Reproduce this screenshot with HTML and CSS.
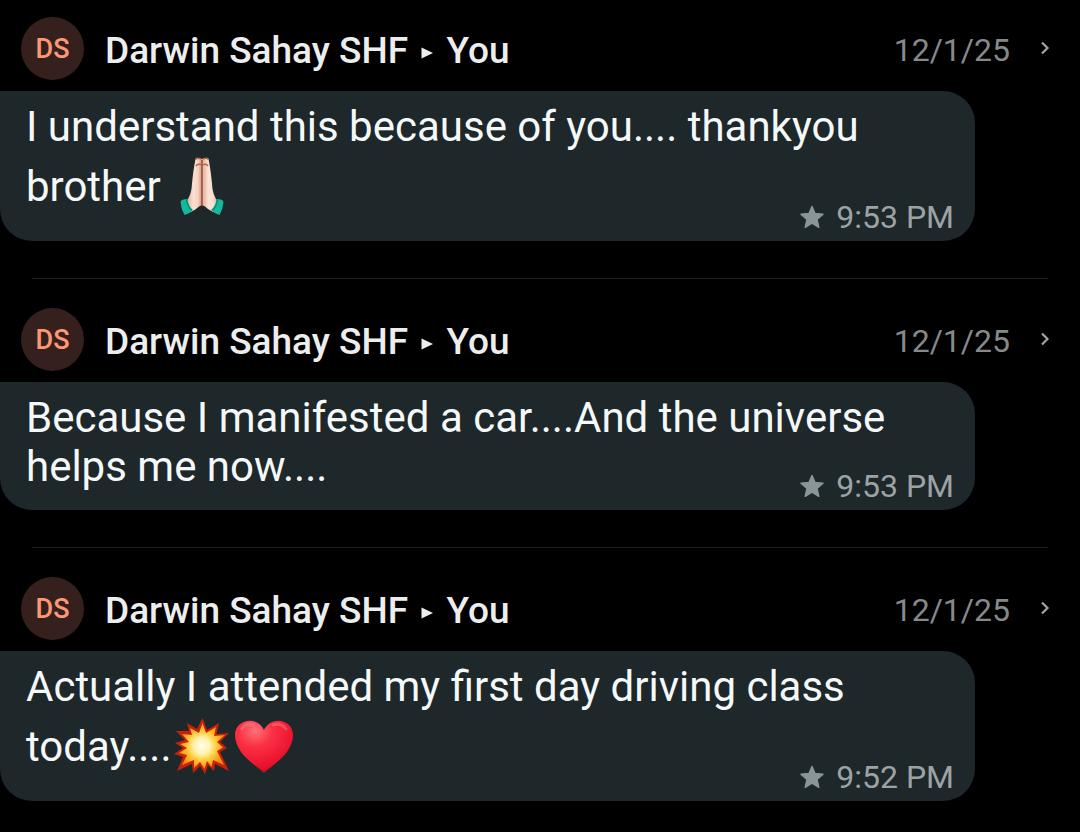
FILE: index.html
```html
<!DOCTYPE html>
<html lang="en">
<head>
  <meta charset="UTF-8">
  <title>Starred messages</title>
  <meta name="viewport" content="width=device-width, initial-scale=1.0">
  <link rel="stylesheet" href="styles.css">
</head>
<body>

  <!-- shared icons -->
  <svg class="defs" width="0" height="0" aria-hidden="true">
    <symbol id="triangle" viewBox="0 0 12 12">
      <path d="M0.5 0.5L12 6L0.5 11.5Z" fill="currentColor"/>
    </symbol>
    <symbol id="chevron" viewBox="0 0 10 16">
      <path d="M2 1.5L7.5 7L2 12.5" fill="none" stroke="currentColor" stroke-width="2.200"/>
    </symbol>
    <symbol id="star" viewBox="0 0 24 24">
      <path d="M12 1.5L15 8.6L23 9.2L17 14.4L18.8 22.3L12 18.2L5.2 22.3L7 14.4L1 9.2L9 8.6Z" fill="currentColor" stroke="currentColor" stroke-width="1.500" stroke-linejoin="round"/>
    </symbol>
  </svg>

  <main class="messages">
    <article class="message">
      <header class="header">
        <span class="avatar">DS</span>
        <h2 class="name">Darwin Sahay SHF <svg class="triangle"><use href="#triangle"/></svg> You</h2>
        <time class="date">12/1/25</time>
        <svg class="chevron"><use href="#chevron"/></svg>
      </header>
      <div class="bubble">
        <p class="text">I understand this because of you.... thankyou<br>brother <svg class="emoji" viewBox="0 0 60 71" role="img" aria-label="folded hands">
          <defs>
            <linearGradient id="skinLeft" x1="0" y1="0" x2="1" y2="0">
              <stop offset="0" stop-color="#dfa78d"/>
              <stop offset="0.45" stop-color="#fbe0d2"/>
              <stop offset="0.75" stop-color="#f6d3c2"/>
              <stop offset="1" stop-color="#cf8f78"/>
            </linearGradient>
            <linearGradient id="skinRight" x1="0" y1="0" x2="1" y2="0">
              <stop offset="0" stop-color="#e0ab95"/>
              <stop offset="0.4" stop-color="#fbe3d6"/>
              <stop offset="0.7" stop-color="#f8dccd"/>
              <stop offset="1" stop-color="#dfa78d"/>
            </linearGradient>
          </defs>
          <path d="M23.5 8Q24 6.500 27 7L30 8V54Q27 55 24 58L19 61L14 51Q18 46 19.500 38Q21 20 23.500 8Z" fill="url(#skinLeft)"/>
          <path d="M36.500 8Q36 6.500 33 7L30 8V54Q33 55 36 58L41 61L46 51Q42 46 40.500 38Q39 20 36.500 8Z" fill="url(#skinRight)"/>
          <path d="M30 9V55" stroke="#96503c" stroke-width="1.500" fill="none"/>
          <path d="M24 15Q26 12 29 14M36 15Q34 12 31 14M23.500 8.500Q25 6.500 29 8M31 8Q35 6.500 36.500 8.500" stroke="#b5674c" stroke-width="1.500" fill="none"/>
          <path d="M8.500 51Q9 48 15.500 48Q16 55 21 59Q18 62.500 12.500 64Q9 58 8.500 51Z" fill="#12b99f"/>
          <path d="M51.500 51Q51 48 44.500 48Q44 55 39 59Q42 62.500 47.500 64Q51 58 51.500 51Z" fill="#12b99f"/>
          <path d="M14.500 48.500Q15.500 56 20 59.500M45.500 48.500Q44.500 56 40 59.500" stroke="#078b7c" stroke-width="1.500" fill="none"/>
        </svg></p>
        <div class="meta">
          <svg class="star"><use href="#star"/></svg>
          <time>9:53 PM</time>
        </div>
      </div>
    </article>

    <article class="message">
      <header class="header">
        <span class="avatar">DS</span>
        <h2 class="name">Darwin Sahay SHF <svg class="triangle"><use href="#triangle"/></svg> You</h2>
        <time class="date">12/1/25</time>
        <svg class="chevron"><use href="#chevron"/></svg>
      </header>
      <div class="bubble">
        <p class="text">Because I manifested a car....And the universe<br>helps me now....</p>
        <div class="meta">
          <svg class="star"><use href="#star"/></svg>
          <time>9:53 PM</time>
        </div>
      </div>
    </article>

    <article class="message">
      <header class="header">
        <span class="avatar">DS</span>
        <h2 class="name">Darwin Sahay SHF <svg class="triangle"><use href="#triangle"/></svg> You</h2>
        <time class="date">12/1/25</time>
        <svg class="chevron"><use href="#chevron"/></svg>
      </header>
      <div class="bubble">
        <p class="text">Actually I attended my first day driving class<br>today....<svg class="emoji" viewBox="0 0 60 71" role="img" aria-label="collision">
          <defs>
            <radialGradient id="blast">
              <stop offset="0" stop-color="#fffdf0"/>
              <stop offset="0.35" stop-color="#fff3b0"/>
              <stop offset="0.65" stop-color="#ffc933"/>
              <stop offset="1" stop-color="#f58a12"/>
            </radialGradient>
          </defs>
          <path d="M30.500 7L35 19L47 12L44.500 23L57 22L48 31L55 37L48 41L57 60L43 53L42 60L36 54L33 63L28 55L21 62L20 53L5 60L11 46L2 43L11 37L3 32L13 29L4 20L17 20L15 12L25 18Z" fill="#c9200a"/>
          <path d="M30.500 12L34 22L44 16L42 25L53 24L45 31L51 36.500L45 40L52 54L41 49L39.500 56L35 50L32.500 58L28 51L22 57L22 49L10 54L15 44L7 42L15 37L8 33L17 31L10 23L20 24L18 17L27 22Z" fill="url(#blast)"/>
        </svg><svg class="emoji" viewBox="0 0 60 71" role="img" aria-label="red heart">
          <defs>
            <radialGradient id="love" cx="0.35" cy="0.2" r="0.85">
              <stop offset="0" stop-color="#ff7078"/>
              <stop offset="0.35" stop-color="#fb3045"/>
              <stop offset="0.75" stop-color="#ed1530"/>
              <stop offset="1" stop-color="#c90a25"/>
            </radialGradient>
          </defs>
          <path d="M31 62C27 57 2 44 2 24C2 8 24 4 31 19C38 4 60 8 60 24C60 44 35 57 31 62Z" fill="url(#love)"/>
          <path d="M9 18Q13 11 21 14M40 14Q48 11 53 18" stroke="#ff98a0" stroke-width="3" stroke-linecap="round" fill="none" opacity="0.35"/>
        </svg></p>
        <div class="meta">
          <svg class="star"><use href="#star"/></svg>
          <time>9:52 PM</time>
        </div>
      </div>
    </article>
  </main>

</body>
</html>
```

FILE: styles.css
```css
body {
  margin: 0;
  background-color: #000;
  font-family: Roboto, sans-serif;
}

.defs {
  position: absolute;
}

.messages {
  padding-top: 17px;
}

.message + .message::before {
  content: "";
  display: block;
  height: 1px;
  margin: 37px 32px 29px;
  background-color: #1b1d1e;
}

.header {
  display: flex;
  align-items: center;
  height: 63px;
  margin-bottom: 11px;
  padding: 0 30px 0 21px;
}

.avatar {
  display: flex;
  align-items: center;
  justify-content: center;
  width: 63px;
  height: 63px;
  border-radius: 50%;
  background-color: #35201d;
  color: #fc9775;
  font-size: 27px;
  font-weight: 500;
}

.name {
  flex: 1;
  margin: 0 0 0 21px;
  padding-top: 3px;
  color: #eceeee;
  font-size: 37px;
  font-weight: 500;
}

.triangle {
  width: 12px;
  height: 12px;
  margin: 0 4px;
  vertical-align: 4px;
}

.date {
  padding-top: 3px;
  color: #85898b;
  font-size: 32px;
}

.chevron {
  width: 10px;
  height: 16px;
  margin-left: 30px;
  color: #a0a4a6;
}

.bubble {
  position: relative;
  box-sizing: border-box;
  margin-right: 105px;
  padding: 11px 26px 19px;
  border-radius: 0 32px 32px 32px;
  background-color: #1e2729;
}

.text {
  margin: 0;
  color: #f4f8f9;
  font-size: 42px;
  line-height: 49px;
}

.emoji {
  width: 60px;
  height: 71px;
  margin-left: 1px;
  vertical-align: -21px;
}

.meta {
  position: absolute;
  right: 21px;
  bottom: 5px;
  display: flex;
  align-items: center;
  gap: 12px;
  color: #9da3a5;
  font-size: 32px;
}

.star {
  width: 24px;
  height: 24px;
  color: #8a9598;
}
```
